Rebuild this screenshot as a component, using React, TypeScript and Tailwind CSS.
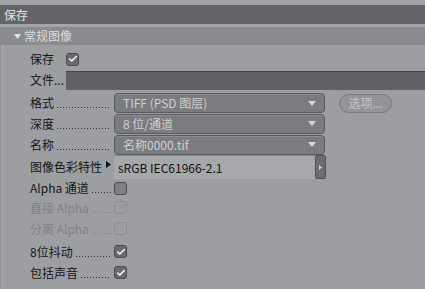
import { Check } from "lucide-react";

const font = { fontFamily: '"Noto Sans CJK SC", "Noto Sans", sans-serif' };

function Box({ state }: { state: "on" | "off" | "disabled" }) {
  if (state === "disabled") {
    return <span className="w-[13px] h-[13px] rounded-[3px] border border-[#8c8d91] bg-[#9b9ca0] shrink-0" />;
  }
  return (
    <span
      className={`w-[13px] h-[13px] rounded-[3px] border border-[#4a4b4f] flex items-center justify-center shrink-0 ${
        state === "on" ? "bg-[#6a6b6f]" : "bg-[#7f8084]"
      }`}
    >
      {state === "on" && <Check className="w-[10px] h-[10px] text-white" strokeWidth={3.5} />}
    </span>
  );
}

function Label({ text, dim }: { text: string; dim?: boolean }) {
  return (
    <div className={`w-[84px] shrink-0 flex items-center whitespace-nowrap ${dim ? "text-[#808185]" : "text-[#151515]"}`}>
      <span className="shrink-0">{text}</span>
      <span
        className={`flex-1 min-w-0 ml-[3px] mr-[3px] h-[1px] mt-[9px] bg-[length:3px_1px] ${
          dim
            ? "bg-[linear-gradient(to_right,#7d7e82_1px,transparent_1px)]"
            : "bg-[linear-gradient(to_right,#2e2e30_1px,transparent_1px)]"
        }`}
      />
    </div>
  );
}

function Select({ text }: { text: string }) {
  return (
    <div className="w-[211px] h-[20px] rounded-[4px] border border-[#58595d] bg-[#7b7c80] flex items-center justify-between pl-[8px] pr-[8px] shadow-[inset_0_1px_0_#8e8f93]">
      <span className="text-[#cfd0d2] text-[12px]">{text}</span>
      <svg width="8" height="5" viewBox="0 0 8 5">
        <path d="M0 0 L8 0 L4 5 Z" fill="#d6d6d8" />
      </svg>
    </div>
  );
}

export default function App() {
  return (
    <div style={font} className="w-[425px] h-[289px] bg-[#9d9ea2] overflow-hidden text-[12px] leading-none">
      <div className="h-[5px] bg-[#a3a4a8]" />
      <div className="h-[19px] bg-[#636468] flex items-center pl-[4px] text-[#e6e6e8]">保存</div>
      <div className="h-[3px] bg-[#a4a5a9]" />
      <div className="h-[18px] bg-[#8a8b8f] flex items-center pl-[14px] text-[#dcdcde]">
        <svg width="7" height="5" viewBox="0 0 7 5" className="mr-[3px]">
          <path d="M0 0 L7 0 L3.5 5 Z" fill="#e4e4e6" />
        </svg>
        常规图像
      </div>
      <div className="flex h-[244px]">
        <div className="w-[3px] bg-[#97989c] border-r border-[#aaabaf]" />
        <div className="flex-1 flex flex-col pl-[27px] pt-[5px]">
          <div className="h-[18px] flex items-center">
            <span className="w-[36px] text-[#151515]">保存</span>
            <Box state="on" />
          </div>
          <div className="h-[20px] mt-[2px] flex items-center">
            <span className="w-[36px] text-[#151515] whitespace-nowrap">文件...</span>
            <div className="flex-1 h-[19px] bg-[#606166] border-t border-[#45464a]" />
          </div>
          <div className="h-[20px] mt-[3px] flex items-center">
            <Label text="格式" />
            <Select text="TIFF (PSD 图层)" />
            <div className="ml-[14px] w-[53px] h-[19px] rounded-full border border-[#7a7b7f] bg-[#94959a] flex items-center justify-center text-[#c5c6c9] text-[12px]">
              选项...
            </div>
          </div>
          <div className="h-[21px] flex items-center">
            <Label text="深度" />
            <Select text="8 位/通道" />
          </div>
          <div className="h-[21px] flex items-center">
            <Label text="名称" />
            <Select text="名称0000.tif" />
          </div>
          <div className="h-[24px] flex items-center">
            <div className="w-[84px] shrink-0 flex items-center text-[#151515] whitespace-nowrap">
              图像色彩特性
              <svg width="5" height="7" viewBox="0 0 5 7" className="ml-[4px] -mt-[6px]">
                <path d="M0 0 L5 3.5 L0 7 Z" fill="#111" />
              </svg>
            </div>
            <div className="w-[201px] h-[24px] bg-[#a7a8ac] border-t border-[#8a8b8f] flex items-center pl-[4px] text-[#111] text-[12px]">
              sRGB IEC61966-2.1
            </div>
            <div className="w-[11px] h-[24px] bg-[#6c6d71] border border-[#505155] rounded-[2px] flex items-center justify-center">
              <svg width="3" height="5" viewBox="0 0 3 5">
                <path d="M0 0 L3 2.5 L0 5 Z" fill="#d8d8da" />
              </svg>
            </div>
          </div>
          <div className="h-[18px] flex items-center">
            <Label text="Alpha 通道" />
            <Box state="off" />
          </div>
          <div className="h-[21px] flex items-center">
            <Label text="直接 Alpha" dim />
            <Box state="disabled" />
          </div>
          <div className="h-[21px] flex items-center">
            <Label text="分离 Alpha" dim />
            <Box state="disabled" />
          </div>
          <div className="h-[21px] mt-[2px] flex items-center">
            <Label text="8位抖动" />
            <Box state="on" />
          </div>
          <div className="h-[21px] flex items-center">
            <Label text="包括声音" />
            <Box state="on" />
          </div>
        </div>
      </div>
    </div>
  );
}
